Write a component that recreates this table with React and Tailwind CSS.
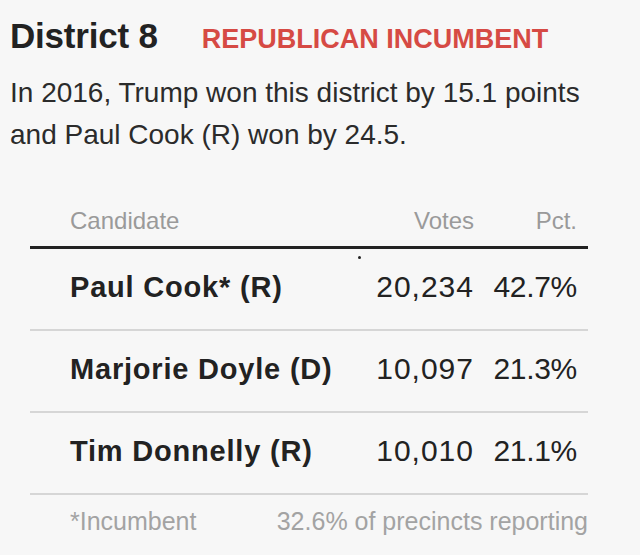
const rows = [
  { name: 'Paul Cook* (R)', votes: '20,234', pct: '42.7%' },
  { name: 'Marjorie Doyle (D)', votes: '10,097', pct: '21.3%' },
  { name: 'Tim Donnelly (R)', votes: '10,010', pct: '21.1%' },
];

export default function App() {
  return (
    <div
      className="w-[640px] h-[555px] bg-[#f7f7f7] text-[#222] overflow-hidden"
      style={{ fontFamily: '"Liberation Sans", Arial, sans-serif' }}
    >
      <div className="px-[10px] pt-[16px]">
        <div className="flex items-baseline leading-[40px]">
          <h1 className="text-[35px] font-bold tracking-[-0.2px]">District 8</h1>
          <span className="ml-[44px] text-[27px] font-bold text-[#d64a44]">REPUBLICAN INCUMBENT</span>
        </div>
        <p className="mt-[13px] text-[28px] leading-[42px] text-[#2b2b2b]">
          In 2016, Trump won this district by 15.1 points
          <br />
          and Paul Cook (R) won by 24.5.
        </p>
      </div>

      <div className="ml-[30px] w-[558px] mt-[50px]">
        <div className="flex leading-[30px] pb-[10px] text-[24px] text-[#9a9a9a] border-b-[3px] border-[#222]">
          <div className="pl-[40px] flex-1">Candidate</div>
          <div className="w-[120px] text-right">Votes</div>
          <div className="w-[114px] pr-[11px] text-right">Pct.</div>
        </div>
        {rows.map((r, i) => (
          <div key={r.name} className="relative flex items-center h-[82px] pb-[4px] leading-[34px] border-b-2 border-[#d6d6d6]">
            {i === 0 && <span className="absolute left-[328px] top-[7px] w-[3px] h-[3px] rounded-full bg-[#222]" />}
            <div className="pl-[40px] flex-1 text-[29px] font-bold tracking-[0.8px]">{r.name}</div>
            <div className="w-[120px] text-right text-[30px] tracking-[1px]">{r.votes}</div>
            <div className="w-[114px] pr-[11px] text-right text-[30px] tracking-[-0.3px]">{r.pct}</div>
          </div>
        ))}
        <div className="flex justify-between mt-[11px] leading-[30px] text-[25px] text-[#a3a3a3]">
          <div className="pl-[40px]">*Incumbent</div>
          <div>32.6% of precincts reporting</div>
        </div>
      </div>
    </div>
  );
}
